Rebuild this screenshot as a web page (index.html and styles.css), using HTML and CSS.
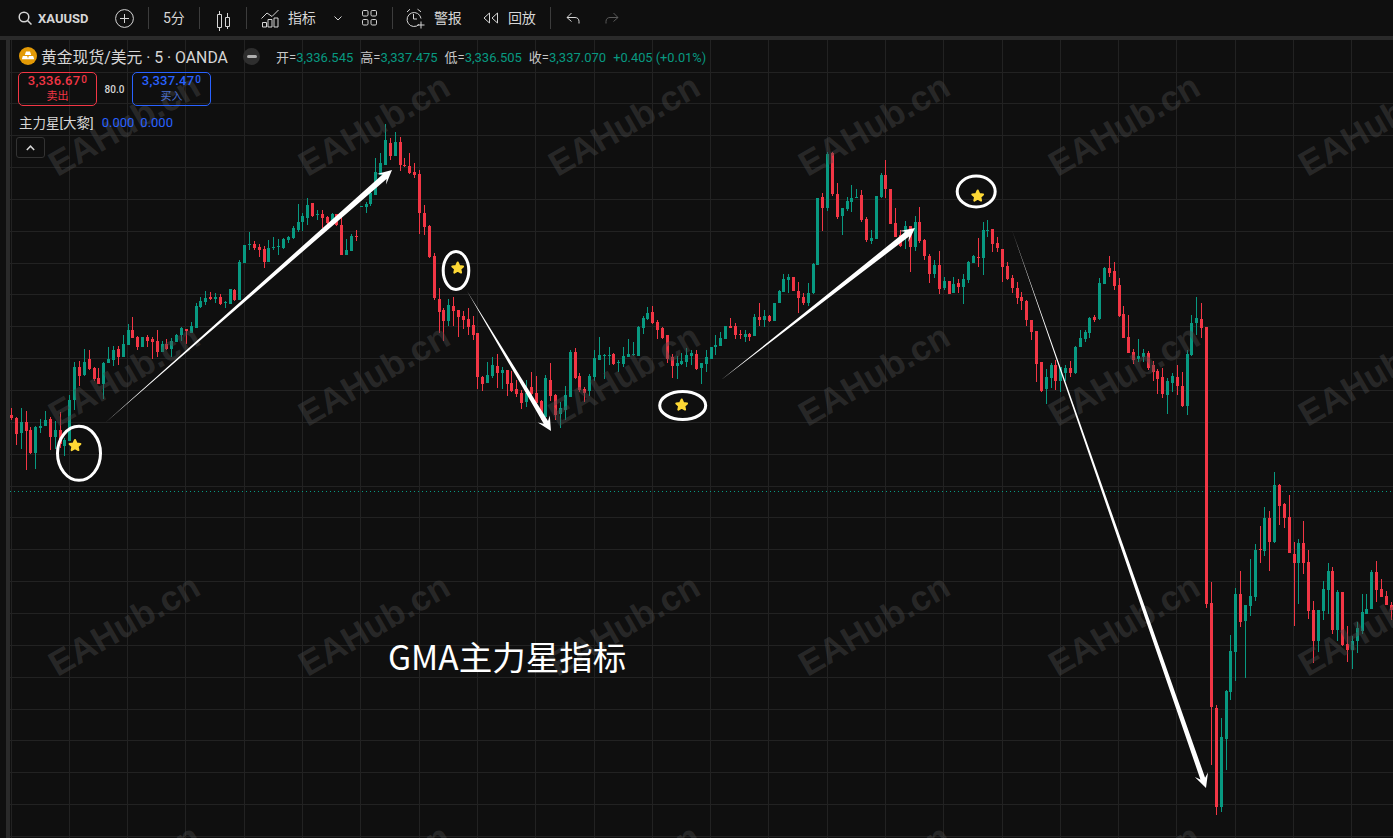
FILE: index.html
```html
<!DOCTYPE html>
<html lang="zh-CN">
    <head>
        <meta charset="UTF-8" />
        <meta name="viewport" content="width=device-width,initial-scale=1" />
        <title>XAUUSD 主力星指标</title>
        <link rel="stylesheet" href="styles.css">
    </head>
    <body>
        <header class="toolbar">
            <div class="symbol">
                <svg class="icon heavy" width="14" height="14" viewBox="0 0 14 14"><circle cx="6" cy="6" r="4.8" /><path d="M9.5 9.5 13.5 13.5" /></svg>
                <span>XAUUSD</span>
            </div>
            <svg class="icon add" width="19" height="19" viewBox="0 0 19 19"><circle cx="9.5" cy="9.5" r="8.9" /><path d="M9.5 5v9M5 9.5h9" /></svg>
            <div class="sep"></div>
            <span class="tool-text">5分</span>
            <div class="sep"></div>
            <svg class="icon" width="18" height="28" viewBox="0 0 18 28"><path d="M5.5 7v3M5.5 24v3M3.5 10.5h4v13h-4zM13.5 9v4M13.5 22v3M11.5 13.5h4v9h-4z" /></svg>
            <div class="sep"></div>
            <div class="tool">
                <svg class="icon" width="18" height="20" viewBox="0 0 18 20"><path d="M.5 10.5 6 5l5 3.5 6.500-6.500M1.500 14.500h4v4.500h-4zM7 11.500h4v7.500h-4zM13 10h4v9h-4z" /></svg>
                <span class="tool-text">指标</span>
            </div>
            <svg class="icon chevron" width="8" height="5" viewBox="0 0 8 5"><path d="M.5.500 4 4 7.500.500" /></svg>
            <svg class="icon layouts" width="17" height="16" viewBox="0 0 17 16"><rect x="1.500" y=".5" width="5.500" height="5.500" rx="1.200" /><rect x="10" y=".5" width="5.500" height="5.500" rx="1.200" /><rect x="1.500" y="9.500" width="5.500" height="5.500" rx="1.200" /><rect x="10" y="9.500" width="5.500" height="5.500" rx="1.200" /></svg>
            <div class="sep"></div>
            <div class="tool alert">
                <svg class="icon" width="20" height="21" viewBox="0 0 20 21"><path d="M13 16.500A7 7 0 1 1 15 10.500M7.500 6v5h3.500M1 4 4 1.200M11.500 1.200 15 3.800M15 13.500v7M11.500 17h7" /></svg>
                <span class="tool-text">警报</span>
            </div>
            <div class="tool replay">
                <svg class="icon" width="16" height="12" viewBox="0 0 16 12"><path d="M6.500 1 1 6l5.500 5zM14.500 1 9 6l5.500 5z" /></svg>
                <span class="tool-text">回放</span>
            </div>
            <div class="sep"></div>
            <svg class="icon undo" width="15" height="12" viewBox="0 0 15 12"><path d="M6.500 1 2 5.500 6.500 9.500M2 5.500h8c2.500 0 4 1.500 4 4v2" /></svg>
            <svg class="icon redo" width="15" height="12" viewBox="0 0 15 12"><path d="M8.500 1 13 5.500 8.500 9.500M13 5.500H5c-2.500 0-4 1.500-4 4v2" /></svg>
        </header>

        <main class="chart">
            <svg class="plot" width="1383" height="798" viewBox="10 40 1383 798">
                <g id="grid"></g>
                <line class="price-line" x1="10" y1="491.500" x2="1393" y2="491.500" />
                <g id="candles"></g>
            </svg>

            <div class="watermarks" id="watermarks"></div>

            <svg class="plot" width="1383" height="798" viewBox="10 40 1383 798">
                <defs>
                    <polygon id="star" points="0,-5.500 1.700,-1.900 5.400,-1.600 2.600,.9 3.400,4.600 0,2.600 -3.400,4.600 -2.600,.9 -5.400,-1.600 -1.700,-1.900" />
                </defs>
                <g id="arrows"></g>
                <ellipse class="ring" cx="79" cy="453.300" rx="21.500" ry="27" />
                <ellipse class="ring" cx="456" cy="270.500" rx="12.800" ry="19" />
                <ellipse class="ring" cx="682.700" cy="405.500" rx="23" ry="14" />
                <ellipse class="ring" cx="976.200" cy="191.500" rx="19" ry="15.500" />
                <use class="star" href="#star" x="75" y="445.500" />
                <use class="star" href="#star" x="457.700" y="268" />
                <use class="star" href="#star" x="681.700" y="405" />
                <use class="star" href="#star" x="977.700" y="196" />
            </svg>

            <section class="legend">
                <div class="legend-title">
                    <svg class="gold-logo" width="18" height="18" viewBox="0 0 18 18">
                        <circle cx="9" cy="9" r="9" fill="#e39a06" />
                        <path fill="#fff" d="M7 4.500h4l1.200 3.500H5.800zM3.800 9h4.400l1 3.300H2.800zM9.800 9h4.400l1 3.300H8.800z" />
                    </svg>
                    <span class="legend-name">黄金现货/美元 · 5 · OANDA</span>
                    <span class="hide-btn"></span>
                    <div class="ohlc">
                        <span>开=<b>3,336.545</b></span>
                        <span>高=<b>3,337.475</b></span>
                        <span>低=<b>3,336.505</b></span>
                        <span>收=<b>3,337.070</b></span>
                        <b class="change">+0.405 (+0.01%)</b>
                    </div>
                </div>
                <div class="trade">
                    <div class="trade-box sell">
                        <strong>3,336.67<sup>0</sup></strong>
                        <span>卖出</span>
                    </div>
                    <span class="spread">80.0</span>
                    <div class="trade-box buy">
                        <strong>3,337.47<sup>0</sup></strong>
                        <span>买入</span>
                    </div>
                </div>
                <div class="study">
                    <span>主力星[大黎]</span>
                    <b>0.000</b>
                    <b>0.000</b>
                </div>
                <div class="collapse">
                    <svg class="icon heavy" width="9" height="6" viewBox="0 0 9 6"><path d="M.8 5 4.500 1.200 8.200 5" /></svg>
                </div>
            </section>

            <div class="caption">GMA主力星指标</div>
        </main>

        <script src="chart.js"></script>
    </body>
</html>
```

FILE: styles.css
```css
:root {
    --bg: #0f0f0f;
    --band: #2a2a2a;
    --grid: #222222;
    --text: #d6d6d6;
    --up: #089981;
    --down: #f23645;
    --blue: #2962ff;
}
html,
body {
    height: 100%;
    margin: 0;
    background: var(--bg);
    color: var(--text);
    font-family: Roboto, "Noto Sans CJK SC", sans-serif;
    overflow: hidden;
}
body {
    display: flex;
    flex-direction: column;
}
b,
strong {
    font-weight: inherit;
}

/* 顶部工具栏 */
.toolbar {
    display: flex;
    align-items: center;
    flex: none;
    height: 36px;
    padding-left: 18px;
    border-bottom: 4px solid var(--band);
    font-size: 14px;
}
.icon {
    display: block;
    flex: none;
    fill: none;
    stroke: var(--text);
    stroke-width: 1;
}
.icon.heavy {
    stroke-width: 1.500;
}
.symbol {
    display: flex;
    align-items: center;
    gap: 6px;
    font-size: 13px;
    font-weight: 700;
    width: 72px;
}
.add {
    margin-left: 25px;
}
.sep {
    flex: none;
    width: 1px;
    height: 22px;
    margin: 0 14px;
    background: #3c3c3c;
}
.tool {
    display: flex;
    align-items: center;
    gap: 9px;
}
.tool-text {
    line-height: 20px;
    white-space: nowrap;
}
.chevron {
    margin-left: 18px;
}
.layouts {
    margin-left: 19px;
}
.alert {
    margin-left: -1px;
}
.alert .tool-text {
    margin-left: -1px;
}
.replay {
    margin-left: 21px;
}
.redo {
    margin-left: 25px;
    stroke: #5a5a5a;
}

/* 图表区域 */
.chart {
    position: relative;
    flex: 1;
    margin-left: 6px;
    border-left: 4px solid var(--band);
    overflow: hidden;
}
.plot {
    position: absolute;
    left: 0;
    top: 0;
    display: block;
}
.grid-line {
    stroke: var(--grid);
    stroke-width: 1;
    shape-rendering: crispEdges;
}
.price-line {
    stroke: var(--up);
    stroke-width: 1;
    stroke-dasharray: 1 3;
    shape-rendering: crispEdges;
}
.candle-up {
    fill: var(--up);
    shape-rendering: crispEdges;
}
.candle-down {
    fill: var(--down);
    shape-rendering: crispEdges;
}
.arrow {
    fill: #fff;
}
.ring {
    fill: none;
    stroke: #fff;
    stroke-width: 3;
}
.star {
    fill: #fdd835;
    stroke: #fdd835;
    stroke-width: 2;
    stroke-linejoin: round;
}

/* 水印 */
.watermarks {
    position: absolute;
    left: -11px;
    top: -40px;
    display: grid;
    grid-template-columns: repeat(6, 250px);
    grid-auto-rows: 250px;
}
.watermark {
    display: flex;
    align-items: center;
    justify-content: center;
    font-family: "Liberation Sans", sans-serif;
    font-size: 35px;
    font-weight: 700;
    color: rgba(72, 72, 72, 0.45);
    transform: rotate(-30deg);
}

/* 左上角图例 */
.legend {
    position: absolute;
    left: 6px;
    top: 0;
    display: flex;
    flex-direction: column;
    align-items: flex-start;
    font-size: 13px;
}
.legend-title {
    display: flex;
    align-items: center;
    height: 32px;
    padding-left: 3px;
    white-space: nowrap;
}
.gold-logo {
    flex: none;
    margin-right: 4px;
}
.legend-name {
    width: 187px;
    font-size: 15.800px;
}
.hide-btn {
    position: relative;
    flex: none;
    width: 17px;
    height: 17px;
    margin-left: 15px;
    border-radius: 50%;
    background: #2e2e2e;
}
.hide-btn::after {
    content: "";
    position: absolute;
    left: 3.500px;
    top: 7px;
    width: 10px;
    height: 3px;
    border-radius: 2px;
    background: #b0b0b0;
}
.ohlc {
    display: flex;
    align-items: baseline;
    gap: 7px;
    margin-left: 16px;
    color: #c8c8c8;
}
.ohlc b {
    color: var(--up);
}
.ohlc .change {
    font-size: 12.800px;
}
.trade {
    display: flex;
    align-items: center;
}
.trade-box {
    display: flex;
    flex-direction: column;
    align-items: center;
    box-sizing: border-box;
    width: 79px;
    height: 34px;
    border: 1px solid;
    border-radius: 5px;
    line-height: 16px;
}
.trade-box strong {
    font-size: 13px;
    font-weight: 500;
    letter-spacing: 0.2px;
}
.trade-box sup {
    margin-left: 1px;
    font-size: 10px;
    line-height: 0;
    vertical-align: 2px;
}
.trade-box span {
    font-size: 11px;
    line-height: 15px;
}
.sell {
    margin-left: 2px;
    color: var(--down);
    border-color: var(--down);
}
.buy {
    color: var(--blue);
    border-color: var(--blue);
}
.buy span {
    color: #4a6fd0;
}
.spread {
    width: 35px;
    text-align: center;
    font-size: 10px;
    font-weight: 500;
}
.study {
    display: flex;
    align-items: center;
    gap: 8px;
    height: 20px;
    margin-top: 7px;
    padding-left: 3px;
    font-size: 13.500px;
    line-height: 20px;
}
.study b {
    margin-left: -2px;
    font-size: 13px;
    color: var(--blue);
}
.study span + b {
    margin-left: 0;
}
.collapse {
    display: flex;
    align-items: center;
    justify-content: center;
    box-sizing: border-box;
    width: 29px;
    height: 21px;
    margin-top: 4px;
    border: 1px solid #333;
    border-radius: 3px;
    background: var(--bg);
}

/* 图上的说明文字 */
.caption {
    position: absolute;
    left: 378px;
    top: 592px;
    font-family: "Noto Sans CJK SC", sans-serif;
    font-size: 33.500px;
    line-height: 48px;
    color: #fff;
    white-space: nowrap;
}
```

FILE: chart.js
```js
// K线数据: [实体上沿, 实体下沿, 最高, 最低, 是否上涨] (都是图上的 y 坐标)
const candles = [
    [415,418,408,420,0],[418,434,417,445,0],[422,433,408,449,1],[422,431,411,470,0],[430,453,427,454,0],
    [427,453,426,469,1],[426,428,419,433,1],[420,426,411,426,1],[419,437,417,450,0],[430,437,421,449,1],
    [430,444,412,448,0],[440,446,438,456,1],[400,441,395,441,1],[367,400,362,410,1],[367,376,361,386,0],
    [362,375,349,376,1],[359,369,350,370,0],[368,379,367,381,0],[378,384,368,384,0],[363,384,362,399,1],
    [359,363,347,363,1],[350,360,346,366,1],[349,357,346,365,0],[344,357,335,357,1],[330,345,324,345,1],
    [330,338,317,338,0],[337,347,336,350,0],[337,347,337,347,1],[337,341,335,347,0],[339,342,337,359,0],
    [341,352,330,357,0],[344,352,341,352,1],[344,349,339,350,0],[341,349,338,357,1],[335,342,334,342,1],
    [328,335,327,341,1],[329,331,329,344,0],[326,333,322,333,1],[306,328,303,328,1],[301,307,297,308,1],
    [298,302,291,305,1],[297,299,292,300,0],[297,299,293,303,1],[297,304,294,305,0],[302,303,301,308,1],
    [289,304,289,304,1],[290,300,289,301,0],[262,300,260,300,1],[245,263,245,263,1],[244,245,232,250,1],
    [244,248,241,250,0],[247,250,244,257,0],[249,262,246,268,0],[248,262,240,262,1],[247,248,237,250,1],
    [246,247,239,255,1],[239,248,238,249,1],[237,240,236,243,1],[228,238,226,239,1],[222,230,204,232,1],
    [216,222,213,231,1],[205,218,198,225,1],[203,216,203,217,0],[214,215,210,220,1],[214,218,210,228,0],
    [217,223,216,224,0],[214,223,213,224,1],[214,225,214,226,0],[225,255,216,255,0],[250,255,239,255,1],
    [236,251,234,251,1],[236,237,230,241,0],[206,207,206,207,1],[204,207,202,213,1],[193,204,192,206,1],
    [172,195,158,195,1],[163,175,153,175,1],[140,165,124,165,1],[143,156,138,160,0],[142,156,132,156,1],
    [142,165,137,171,0],[165,166,158,167,0],[166,173,153,174,0],[172,175,163,178,0],[174,213,170,234,0],
    [213,227,205,235,0],[226,257,225,258,0],[256,298,253,300,0],[299,312,288,333,0],[310,321,308,341,0],
    [305,321,299,326,1],[306,311,297,326,0],[310,317,310,337,0],[316,320,311,329,0],[319,327,308,335,0],
    [325,335,316,340,0],[333,377,333,389,0],[377,384,376,391,0],[375,383,362,383,1],[365,376,357,378,1],
    [366,373,354,388,0],[370,373,367,389,1],[370,384,370,396,0],[383,391,371,392,0],[389,394,380,397,0],
    [393,403,390,409,0],[393,402,380,407,1],[387,394,372,400,0],[393,403,376,410,0],[401,415,400,420,0],
    [378,417,375,417,1],[380,396,363,401,0],[395,415,394,420,0],[408,414,402,428,1],[395,410,386,420,1],
    [352,397,350,397,1],[352,378,348,379,0],[376,390,373,392,0],[389,393,387,402,0],[376,391,374,396,1],
    [358,377,350,381,1],[355,360,337,360,1],[355,356,354,379,1],[355,356,347,365,1],[354,364,353,365,0],
    [362,363,360,372,1],[356,364,347,367,1],[354,357,339,357,1],[354,355,342,356,1],[327,356,326,356,1],
    [318,328,316,334,1],[313,319,307,320,1],[312,323,306,324,0],[322,330,320,339,0],[328,338,327,339,0],
    [335,359,335,363,0],[357,366,354,378,0],[363,366,356,379,1],[361,364,353,365,1],[355,362,348,367,1],
    [353,356,350,365,1],[354,369,350,370,0],[363,368,363,384,1],[357,364,350,372,1],[347,359,347,359,1],
    [345,347,335,355,1],[338,346,332,346,1],[326,339,326,339,1],[326,328,318,328,0],[326,335,323,339,0],
    [334,335,330,339,0],[334,337,330,342,1],[334,337,333,341,0],[317,336,314,336,1],[317,320,303,326,0],
    [316,320,310,327,1],[316,321,315,322,0],[303,321,303,321,1],[291,303,290,303,1],[279,292,274,292,1],
    [277,280,274,293,1],[277,291,277,291,0],[291,298,282,313,0],[297,303,293,305,0],[293,303,283,306,1],
    [264,293,263,294,1],[198,265,198,265,1],[197,208,193,231,0],[154,208,152,211,1],[153,194,152,196,0],
    [194,217,183,219,0],[208,216,208,235,1],[201,209,197,211,1],[198,202,185,212,1],[197,198,189,198,1],
    [195,220,190,222,0],[219,240,217,242,0],[238,241,230,244,1],[196,239,196,239,1],[175,197,173,198,1],
    [175,189,160,198,0],[189,224,189,224,0],[223,237,208,237,0],[235,246,230,247,0],[226,236,221,249,1],
    [226,247,226,272,0],[222,247,216,251,1],[222,241,207,243,0],[240,256,239,260,0],[256,274,254,283,0],
    [265,274,260,278,1],[265,289,251,294,0],[281,288,277,290,1],[281,294,281,294,0],[284,293,277,293,1],
    [283,287,279,293,0],[279,287,274,304,1],[262,280,261,283,1],[256,263,255,263,1],[257,258,238,267,0],
    [230,258,222,275,1],[230,231,220,237,1],[229,244,229,252,0],[243,248,237,252,0],[249,267,249,282,0],
    [266,279,262,280,0],[278,288,275,293,0],[288,298,282,304,0],[297,301,292,310,0],[301,320,300,326,0],
    [320,332,320,340,0],[331,364,331,382,0],[362,391,362,392,0],[377,389,369,404,1],[365,378,363,388,1],
    [365,381,360,390,0],[367,381,367,392,1],[368,373,365,381,1],[368,373,361,377,0],[347,373,346,374,1],
    [338,347,330,347,1],[332,339,330,342,1],[318,333,317,338,1],[317,320,315,322,0],[283,319,278,320,1],
    [268,284,267,284,1],[268,273,256,277,0],[271,286,262,290,0],[285,316,278,317,0],[314,338,306,338,0],
    [337,353,315,353,0],[352,360,349,364,0],[356,359,339,362,1],[353,357,349,362,1],[353,368,351,370,0],
    [365,372,361,381,0],[371,379,369,394,0],[377,394,368,398,0],[381,395,378,414,1],[376,383,373,392,1],
    [377,386,365,395,0],[386,406,372,407,0],[354,406,350,415,1],[323,355,315,356,1],[318,323,297,335,1],
    [319,328,303,338,0],[327,604,327,608,0],[603,707,582,765,0],[708,807,705,815,0],[737,807,718,812,1],
    [691,739,690,770,1],[651,692,635,700,1],[594,652,588,681,1],[594,622,571,627,0],[605,621,605,678,1],
    [596,606,559,616,1],[550,597,544,601,1],[549,550,526,563,0],[518,551,507,556,1],[518,542,511,571,0],
    [485,542,472,543,1],[485,506,484,525,0],[504,518,503,528,0],[517,553,495,553,0],[554,563,542,626,0],
    [543,563,539,604,1],[543,563,521,574,0],[562,611,550,619,0],[610,641,601,663,0],[610,641,610,652,1],
    [589,611,581,620,1],[571,590,563,614,1],[571,630,567,634,0],[592,630,590,641,1],[592,645,592,646,0],
    [644,650,626,662,0],[641,650,636,669,1],[628,641,622,653,1],[612,631,594,634,1],[609,614,594,614,1],
    [572,609,570,609,1],[572,590,561,602,0],[589,597,579,597,0],[596,605,591,605,0],[605,610,602,620,0],
];

const NS = "http://www.w3.org/2000/svg";

function add(parent, tag, attrs) {
    const el = document.createElementNS(NS, tag);
    for (const key in attrs) el.setAttribute(key, attrs[key]);
    parent.appendChild(el);
    return el;
}

// 网格线
const grid = document.getElementById("grid");
for (let x = 11; x < 1393; x += 58.3) {
    const px = Math.floor(x) + 0.5;
    add(grid, "line", { class: "grid-line", x1: px, y1: 40, x2: px, y2: 838 });
}
for (let y = 72; y < 838; y += 31.85) {
    const py = Math.floor(y) + 0.5;
    add(grid, "line", { class: "grid-line", x1: 10, y1: py, x2: 1393, y2: py });
}

// K线
const candleGroup = document.getElementById("candles");
candles.forEach(function (c, i) {
    const x = Math.floor(11.5 + 4.858 * i);
    const cls = c[4] ? "candle-up" : "candle-down";
    add(candleGroup, "rect", { class: cls, x: x, y: c[2], width: 1, height: c[3] - c[2] });
    add(candleGroup, "rect", { class: cls, x: x - 1, y: c[0], width: 3, height: Math.max(1, c[1] - c[0]) });
});

// 手绘箭头: 尾部很细, 到箭头处变粗
function arrow(x1, y1, x2, y2, width) {
    const len = Math.hypot(x2 - x1, y2 - y1);
    const ux = (x2 - x1) / len;
    const uy = (y2 - y1) / len;
    const nx = -uy;
    const ny = ux;
    const at = function (back, side) {
        return (x2 - ux * back + nx * side).toFixed(1) + "," + (y2 - uy * back + ny * side).toFixed(1);
    };
    const points = [
        x1 + "," + y1,
        at(10, width / 2),
        at(14, 7),
        at(0, 0),
        at(14, -7),
        at(10, -width / 2),
    ];
    add(document.getElementById("arrows"), "polygon", { class: "arrow", points: points.join(" ") });
}
arrow(105, 423, 392, 170, 6);
arrow(467, 291, 551, 431, 5);
arrow(721, 380, 915, 228, 6);
arrow(1012, 230, 1206, 788, 5);

// 水印
const marks = document.getElementById("watermarks");
for (let i = 0; i < 24; i++) {
    const mark = document.createElement("span");
    mark.className = "watermark";
    mark.textContent = "EAHub.cn";
    marks.appendChild(mark);
}
```
